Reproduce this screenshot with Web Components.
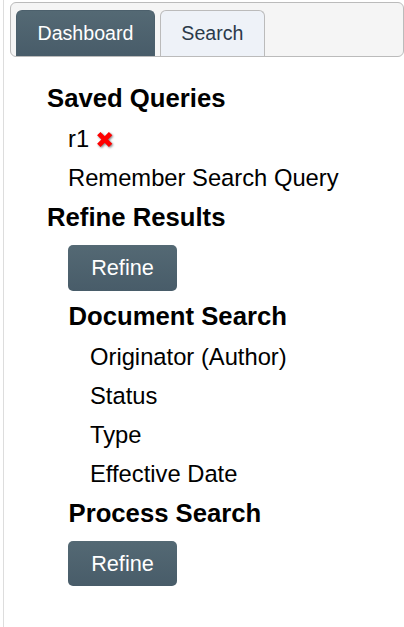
<!DOCTYPE html>
<html>
<head>
<meta charset="utf-8">
<title>Search</title>
<style>
    html, body { margin: 0; padding: 0; background: #fff; }
    body { font-family: "Liberation Sans", Arial, sans-serif; color: #000; height: 627px; overflow: hidden; }
</style>
</head>
<body>
<app-shell>
    <tab-bar slot="tabs">
        <tab-item active>Dashboard</tab-item>
        <tab-item>Search</tab-item>
    </tab-bar>
    <nav-group heading="Saved Queries">
        <nav-row>r1 <delete-icon></delete-icon></nav-row>
        <nav-row>Remember Search Query</nav-row>
    </nav-group>
    <nav-group heading="Refine Results">
        <refine-button>Refine</refine-button>
        <nav-group heading="Document Search" nested>
            <nav-row>Originator (Author)</nav-row>
            <nav-row>Status</nav-row>
            <nav-row>Type</nav-row>
            <nav-row>Effective Date</nav-row>
        </nav-group>
        <nav-group heading="Process Search" nested></nav-group>
        <refine-button>Refine</refine-button>
    </nav-group>
</app-shell>
<script>
class AppShell extends HTMLElement {
    constructor() {
        super();
        this.attachShadow({ mode: 'open' });
        this.shadowRoot.innerHTML = `
            <style>
                :host {
                    border-left: 1px solid #ddd;
                    box-sizing: border-box;
                    display: block;
                    height: 627px;
                    margin-left: 3px;
                    padding: 2px 0 0 6px;
                }

                main {
                    padding: 21px 0 0 37px;
                }
            </style>
            <slot name="tabs"></slot>
            <main>
                <slot></slot>
            </main>
        `;
    }
}

class TabBar extends HTMLElement {
    constructor() {
        super();
        this.attachShadow({ mode: 'open' });
        this.shadowRoot.innerHTML = `
            <style>
                :host {
                    background: #f5f5f5;
                    border: 1px solid #bbb;
                    border-radius: 6px;
                    box-sizing: border-box;
                    display: flex;
                    gap: 5px;
                    height: 55px;
                    padding: 7px 0 0 5px;
                }
            </style>
            <slot></slot>
        `;
    }
}

class TabItem extends HTMLElement {
    constructor() {
        super();
        this.attachShadow({ mode: 'open' });
        this.shadowRoot.innerHTML = `
            <style>
                :host {
                    background: #eef2f8;
                    border: 1px solid #bbb;
                    border-bottom: 0;
                    border-radius: 6px 6px 0 0;
                    box-sizing: border-box;
                    color: #2b3a4a;
                    display: block;
                    font-size: 19.6px;
                    height: 46px;
                    line-height: 45px;
                    padding: 0 20.5px;
                }

                :host([active]) {
                    background: linear-gradient(#546974, #485c69);
                    border-color: #4c606c;
                    color: #fff;
                }
            </style>
            <slot></slot>
        `;
    }
}

class NavGroup extends HTMLElement {
    constructor() {
        super();
        this.attachShadow({ mode: 'open' });
        this.shadowRoot.innerHTML = `
            <style>
                :host {
                    display: block;
                }

                :host([nested]) {
                    margin-left: 1px;
                }

                h2 {
                    font-size: 25.7px;
                    font-weight: bold;
                    line-height: 41px;
                    margin: 0;
                }

                :host([nested]) h2 {
                    margin-left: -0.5px;
                }

                #items {
                    padding-left: 21px;
                }
            </style>
            <h2></h2>
            <div id="items">
                <slot></slot>
            </div>
        `;
        this.shadowRoot.querySelector('h2').textContent = this.getAttribute('heading');
    }
}

class NavRow extends HTMLElement {
    constructor() {
        super();
        this.attachShadow({ mode: 'open' });
        this.shadowRoot.innerHTML = `
            <style>
                :host {
                    display: block;
                    font-size: 23.75px;
                    line-height: 39px;
                }
            </style>
            <slot></slot>
        `;
    }
}

class DeleteIcon extends HTMLElement {
    constructor() {
        super();
        this.attachShadow({ mode: 'open' });
        this.shadowRoot.innerHTML = `
            <style>
                :host {
                    display: inline-block;
                    height: 18px;
                    vertical-align: -2px;
                    width: 18px;
                }

                svg {
                    display: block;
                    filter: drop-shadow(1.5px 1.5px 1px rgba(0, 0, 0, 0.5));
                }
            </style>
            <svg width="18" height="18" viewBox="0 0 18 18">
                <path d="M2.8 2.6 L14.6 14.4 M14.6 2.6 L2.8 14.4" stroke="#f00" stroke-width="4.8"/>
            </svg>
        `;
    }
}

class RefineButton extends HTMLElement {
    constructor() {
        super();
        this.attachShadow({ mode: 'open' });
        this.shadowRoot.innerHTML = `
            <style>
                :host {
                    background: linear-gradient(#546974, #485c69);
                    border-radius: 5px;
                    color: #fff;
                    display: block;
                    font-size: 21.7px;
                    height: 46px;
                    line-height: 45px;
                    margin: 7px 0 5px;
                    text-align: center;
                    width: 109px;
                }

                :host(:last-child) {
                    height: 45px;
                }
            </style>
            <slot></slot>
        `;
    }
}

customElements.define('app-shell', AppShell);
customElements.define('tab-bar', TabBar);
customElements.define('tab-item', TabItem);
customElements.define('nav-group', NavGroup);
customElements.define('nav-row', NavRow);
customElements.define('delete-icon', DeleteIcon);
customElements.define('refine-button', RefineButton);
</script>
</body>
</html>
